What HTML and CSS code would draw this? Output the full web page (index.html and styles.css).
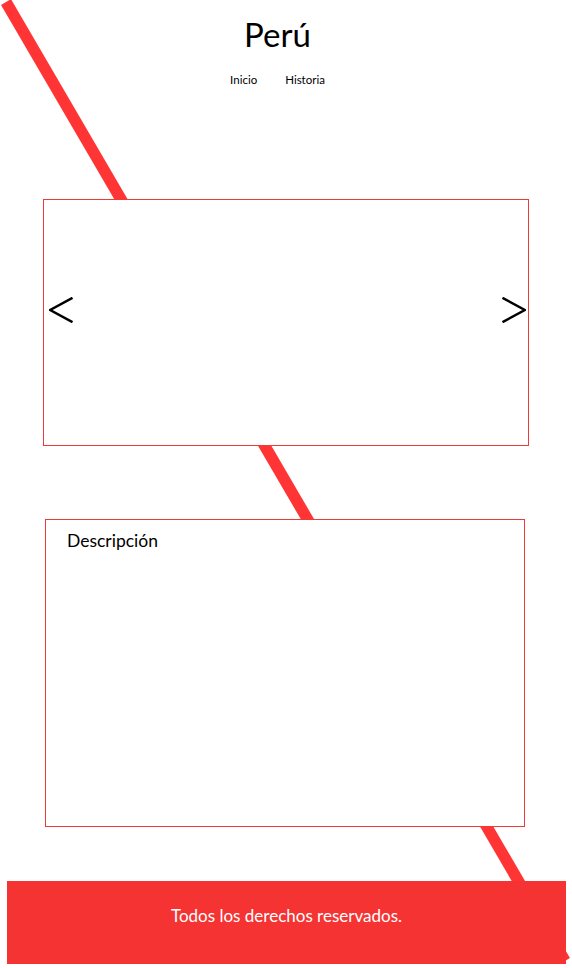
FILE: index.html
```html
<!DOCTYPE html>
<html lang="es">
<head>
<meta charset="utf-8">
<title>Perú</title>
<link rel="stylesheet" href="styles.css">
</head>
<body>
<svg class="deco" width="572" height="968" viewBox="0 0 572 968" aria-hidden="true">
  <line x1="6" y1="2" x2="565" y2="961" stroke="#ff3535" stroke-width="11.5"/>
</svg>
<div class="page">
  <header class="header">
    <h1 class="title">Perú</h1>
    <nav class="nav">
      <a class="nav-link" href="#">Inicio</a>
      <a class="nav-link" href="#">Historia</a>
    </nav>
  </header>
  <main>
    <section class="carousel">
      <button class="arrow" aria-label="Anterior">
        <svg width="24" height="26" viewBox="0 0 24 26"><polyline points="23.5,0.8 1.2,13 23.5,25.2" fill="none" stroke="#000" stroke-width="2.4"/></svg>
      </button>
      <button class="arrow" aria-label="Siguiente">
        <svg width="24" height="26" viewBox="0 0 24 26"><polyline points="0.5,0.8 22.8,13 0.5,25.2" fill="none" stroke="#000" stroke-width="2.4"/></svg>
      </button>
    </section>
    <section class="desc">
      <h2 class="desc-title">Descripción</h2>
    </section>
  </main>
  <footer class="footer">
    <p class="footer-text">Todos los derechos reservados.</p>
  </footer>
</div>
</body>
</html>
```
FILE: styles.css
```css
* { box-sizing: border-box; }
html, body { margin: 0; padding: 0; }
body {
  font-family: Lato, "Open Sans", sans-serif;
  color: #000;
  background: #fff;
  position: relative;
  width: 572px;
  height: 968px;
  overflow: hidden;
}
.deco {
  position: absolute;
  left: 0;
  top: 0;
  z-index: 0;
}
.page {
  position: relative;
  z-index: 1;
}
.header {
  height: 199px;
  padding: 12px 17px 0 0;
  display: flex;
  flex-direction: column;
  align-items: center;
}
.title {
  margin: 0;
  font-size: 33px;
  font-weight: 400;
  line-height: 44px;
}
.nav {
  display: flex;
  gap: 28px;
  margin-top: 16px;
  font-size: 11.5px;
  line-height: 16px;
}
.nav-link {
  color: #000;
  text-decoration: none;
}
.carousel {
  margin-left: 43px;
  width: 486px;
  height: 247px;
  border: 1px solid #f03a3a;
  background: #fff;
  display: flex;
  justify-content: space-between;
  align-items: flex-start;
  padding: 97px 2px 0 5px;
}
.arrow {
  border: 0;
  background: none;
  padding: 0;
  margin: 0;
  width: 24px;
  height: 26px;
  display: block;
}
.arrow svg { display: block; }
.desc {
  margin: 73px 0 0 45px;
  width: 480px;
  height: 308px;
  border: 1px solid #f03a3a;
  background: #fff;
  padding: 10px 21px;
}
.desc-title {
  margin: 0;
  font-size: 17.5px;
  font-weight: 400;
  line-height: 22px;
}
.footer {
  margin: 54px 0 0 7px;
  width: 559px;
  height: 83px;
  background: #f53333;
  color: #fff;
  display: flex;
  align-items: flex-start;
  justify-content: center;
  padding-top: 25px;
}
.footer-text {
  margin: 0;
  font-size: 17px;
  line-height: 20px;
}
```
